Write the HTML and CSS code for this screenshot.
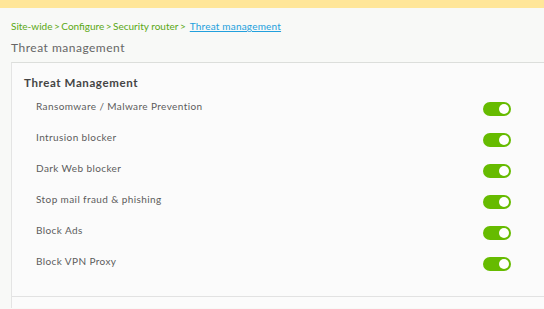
FILE: index.html
```html
<!DOCTYPE html>
<html>
<head>
<meta charset="utf-8">
<link rel="stylesheet" href="styles.css">
</head>
<body>
<div class="topbar"></div>
<div class="header">
  <div class="crumbs">
    <span class="crumb">Site-wide</span><span class="sep">&gt;</span><span class="crumb">Configure</span><span class="sep">&gt;</span><span class="crumb">Security router</span><span class="sep">&gt;</span>
    <a class="current" href="#">Threat management</a>
  </div>
  <h1 class="title">Threat management</h1>
</div>
<div class="main">
  <div class="card">
    <h2 class="card-title">Threat Management</h2>
    <div class="rows">
      <div class="row"><span class="label">Ransomware / Malware Prevention</span><span class="toggle"><span class="knob"></span></span></div>
      <div class="row"><span class="label">Intrusion blocker</span><span class="toggle"><span class="knob"></span></span></div>
      <div class="row"><span class="label">Dark Web blocker</span><span class="toggle"><span class="knob"></span></span></div>
      <div class="row"><span class="label">Stop mail fraud &amp; phishing</span><span class="toggle"><span class="knob"></span></span></div>
      <div class="row"><span class="label">Block Ads</span><span class="toggle"><span class="knob"></span></span></div>
      <div class="row"><span class="label">Block VPN Proxy</span><span class="toggle"><span class="knob"></span></span></div>
    </div>
    <div class="card-footer"></div>
  </div>
</div>
</body>
</html>
```
FILE: styles.css
```css
* { box-sizing: border-box; }
html, body { margin: 0; padding: 0; }
body {
  width: 544px;
  height: 309px;
  overflow: hidden;
  background: #f8f9f7;
  font-family: Lato, "Noto Sans", sans-serif;
  color: #555;
}
.topbar {
  height: 8px;
  background: #ffe699;
}
.header {
  padding: 12px 11px 0 11px;
  height: 54px;
}
.crumbs {
  font-size: 10px;
  line-height: 13px;
  height: 13px;
  color: #5aa814;
  white-space: nowrap;
  letter-spacing: 0;
}
.sep { margin: 0 1.5px; }
.current {
  margin-left: 0;
  color: #22a0dd;
  text-decoration: underline;
  letter-spacing: 0.2px;
}
.title {
  margin: 7px 0 0 0;
  font-size: 12px;
  line-height: 15px;
  font-weight: 400;
  color: #666;
  letter-spacing: 0.5px;
}
.main {
  padding-left: 11px;
}
.card {
  background: #fbfbfb;
  border-top: 1px solid #dcdedb;
  border-left: 1px solid #e4e4e4;
  height: 246px;
  padding: 0 0 0 12px;
  display: flex;
  flex-direction: column;
}
.card-title {
  margin: 13px 0 0 0;
  font-size: 11.5px;
  line-height: 14px;
  font-weight: 700;
  color: #444;
  letter-spacing: 0.6px;
}
.rows {
  display: flex;
  flex-direction: column;
  padding: 3px 0 0 12px;
}
.row {
  display: flex;
  align-items: center;
  justify-content: space-between;
  height: 31px;
  width: 475px;
}
.label {
  font-size: 10px;
  line-height: 12px;
  color: #5c5c5c;
  letter-spacing: 0.4px;
  margin-bottom: 5px;
}
.toggle {
  width: 28px;
  height: 14px;
  border-radius: 7px;
  background: #66bb00;
  display: flex;
  align-items: center;
  justify-content: flex-end;
  padding-right: 2px;
}
.knob {
  width: 10px;
  height: 10px;
  border-radius: 50%;
  background: #fff;
}
.card-footer {
  margin-top: auto;
  margin-left: -12px;
  height: 12px;
  border-top: 1px solid #e2e2e2;
  background: #fbfbfb;
}
```
